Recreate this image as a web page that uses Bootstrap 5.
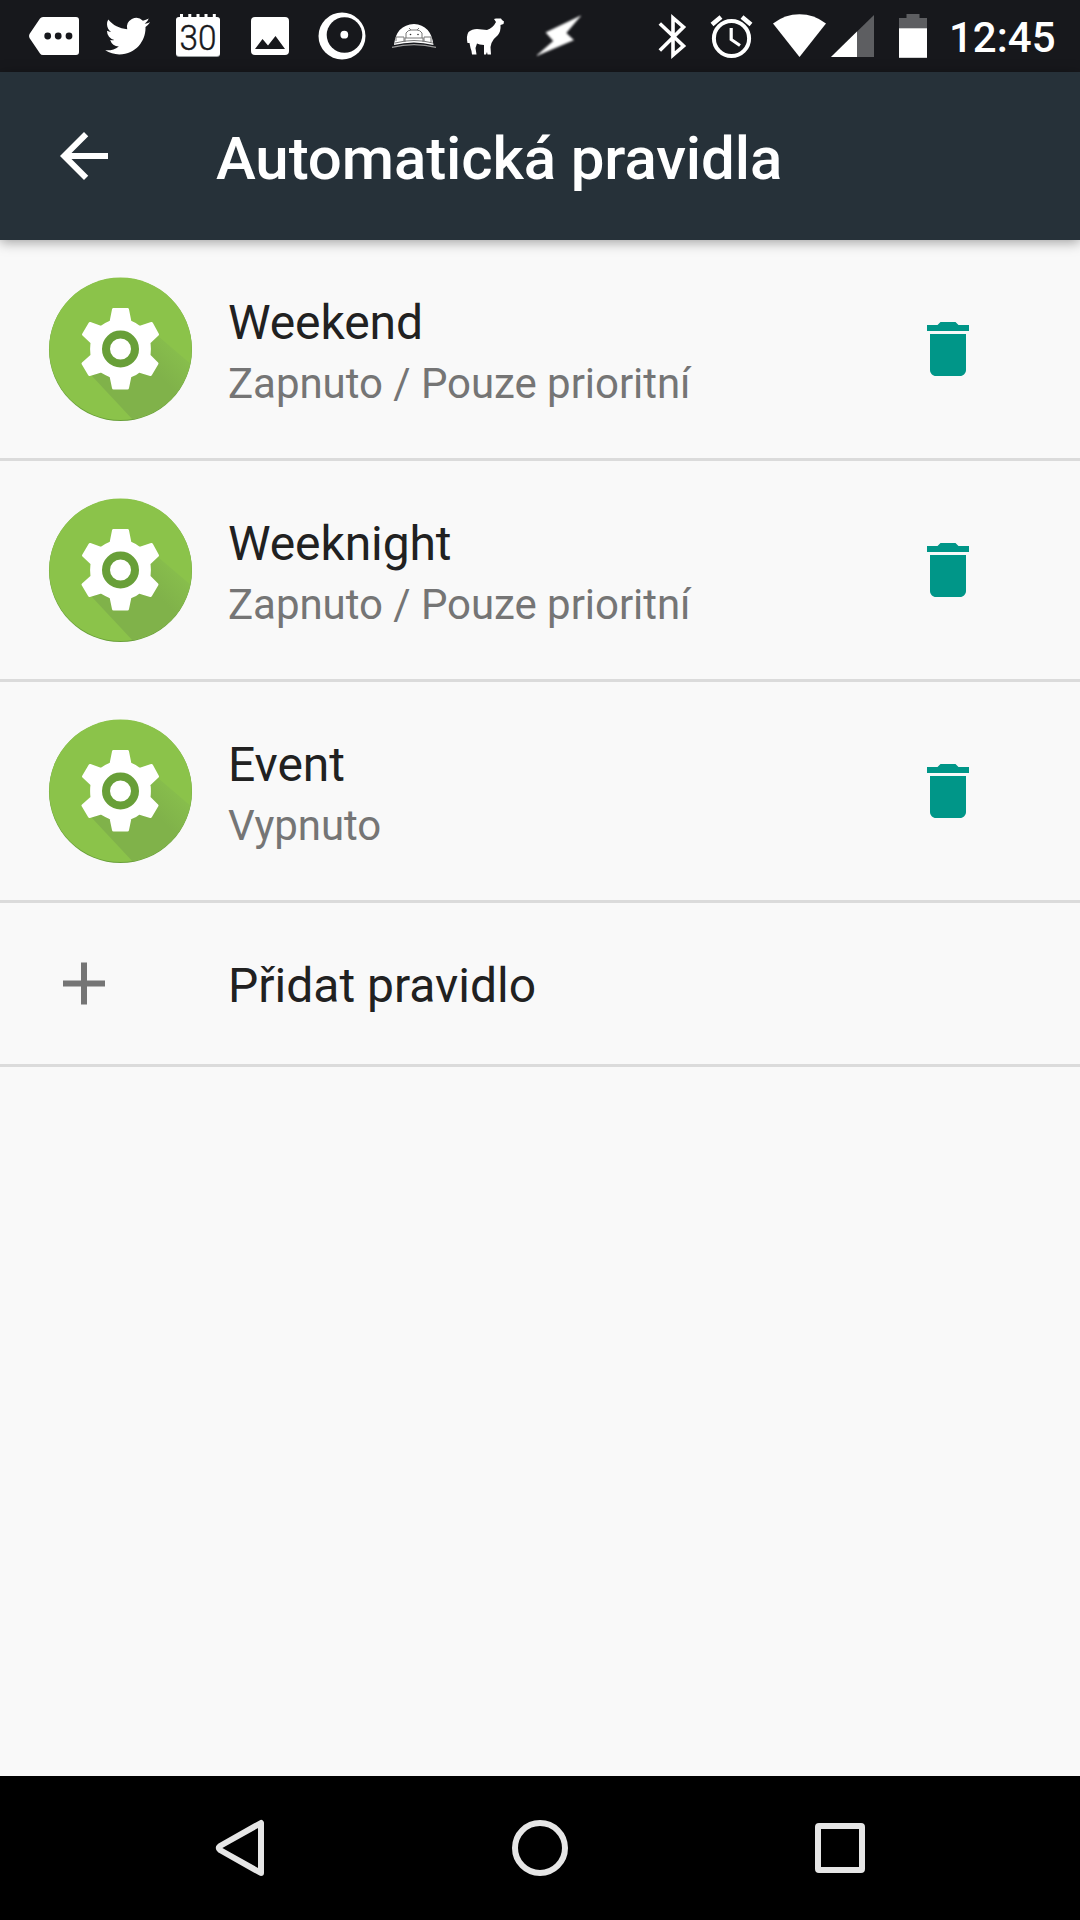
<!DOCTYPE html>
<html lang="cs">
<head>
<meta charset="utf-8">
<meta name="viewport" content="width=device-width, initial-scale=1">
<title>Automatická pravidla</title>
<link href="https://cdn.jsdelivr.net/npm/bootstrap@5.3.0/dist/css/bootstrap.min.css" rel="stylesheet">
<style>
body{font-family:Roboto,"Noto Sans",sans-serif;background:#f9f9f9;color:#212121;width:1080px;height:1920px;overflow:hidden}
svg{display:block;flex:none}
.statusbar{height:72px;background:#17181c;color:#fff}
.clock{font-size:42px;font-weight:500;line-height:72px;padding-top:2px;width:131px}
.appbar{height:168px;background:#263139;color:#fff;padding-left:48px;box-shadow:0 2px 12px rgba(0,0,0,.38);z-index:1}
.screen-title{font-size:60px;font-weight:500;line-height:72px;margin:6px 0 0 96px;letter-spacing:-.1px}
.rule{height:221px;border-bottom:3px solid #dbdbdb;padding:0 96px 0 48px}
.rule-text{margin-left:36px}
.rule-name{font-size:48px;line-height:56px;margin-top:6px;letter-spacing:-.1px}
.rule-state{font-size:42px;line-height:50px;color:#757575;margin-top:8px;letter-spacing:-.05px}
.add-rule{height:164px;border-bottom:3px solid #dbdbdb;padding-left:48px}
.add-label{font-size:48px;line-height:56px;margin:4px 0 0 108px}
.navkeys{height:144px;background:#000;padding:0 168px}
</style>
</head>
<body class="d-flex flex-column">
<svg width="0" height="0" class="position-absolute" aria-hidden="true">
<defs>
<clipPath id="disc"><circle cx="72.500" cy="72" r="71.300"/></clipPath>
<linearGradient id="fade" gradientUnits="userSpaceOnUse" x1="127" y1="73" x2="106" y2="94"><stop offset="0" stop-color="#87bd4c"/><stop offset="1" stop-color="#80b24a"/></linearGradient>
<symbol id="gear" viewBox="0 0 144 144">
<circle cx="72.500" cy="72.500" r="71.500" fill="#689f38"/>
<circle cx="72.500" cy="71.800" r="71.300" fill="#8bc34a"/>
<g clip-path="url(#disc)"><path d="M43 98L86 144H144V88L110 59L90 60Z" fill="url(#fade)"/></g>
<path fill="#fff" stroke="#fff" stroke-width="3" stroke-linejoin="round" d="M65.500 32.500H79.500L82 45Q87 47 91.500 50.500L103.500 46.500L109.500 57.500L101 65.500Q101.800 72 101 78.500L109 86.500L102.500 97.500L91 94Q87 97.500 82 99L79.500 111H65.500L63 99Q58 97 53 94L41.500 97.500L35 86.500L44 78.500Q43.200 72 44 65.500L35.500 57.500L42 46.500L53 50.500Q58 47 63 45Z"/>
<circle cx="72.500" cy="72" r="14.500" fill="#fff" stroke="#689f38" stroke-width="8"/>
</symbol>
<symbol id="trash" viewBox="0 0 24 24"><path fill="#009688" d="M6 19c0 1.100.9 2 2 2h8c1.100 0 2-.9 2-2V7H6zM19 4h-3.500l-1-1h-5l-1 1H5v2h14z"/></symbol>
</defs>
</svg>

<header class="statusbar d-flex flex-shrink-0">
<svg width="93" height="72" viewBox="0 0 93 72"><path fill="#fff" d="M43 17H76Q79 17 79 20V52Q79 55 76 55H43Q41 55 40 53.500L29.500 38Q28.500 36 29.500 34L40 18.500Q41 17 43 17Z"/><g fill="#17181c"><circle cx="47.700" cy="36" r="3.400"/><circle cx="58.200" cy="36" r="3.400"/><circle cx="69" cy="36" r="3.400"/></g></svg>
<svg width="70" height="72" viewBox="93 0 70 72"><path fill="#fff" transform="translate(105.200 13.700) scale(1.870)" d="M23.953 4.570a10 10 0 01-2.825.775 4.958 4.958 0 002.163-2.723c-.951.555-2.005.959-3.127 1.184a4.920 4.920 0 00-8.384 4.482C7.690 8.095 4.067 6.130 1.640 3.162a4.822 4.822 0 00-.666 2.475c0 1.710.870 3.213 2.188 4.096a4.904 4.904 0 01-2.228-.616v.060a4.923 4.923 0 003.946 4.827 4.996 4.996 0 01-2.212.085 4.936 4.936 0 004.604 3.417 9.867 9.867 0 01-6.102 2.105c-.390 0-.779-.023-1.170-.067a13.995 13.995 0 007.557 2.209c9.053 0 13.998-7.496 13.998-13.985 0-.210 0-.420-.015-.630A9.935 9.935 0 0024 4.590z"/></svg>
<svg width="72" height="72" viewBox="163 0 72 72"><rect x="176" y="18" width="44" height="39" rx="3" fill="#9ba0a2"/><rect x="176" y="17" width="44" height="39" rx="3" fill="#fff"/><path d="M181.500 14v5M189.800 14v5M198 14v5M206 14v5M214.300 14v5" stroke="#fff" stroke-width="3"/><text x="179.500" y="50" font-size="35" font-weight="300" textLength="37" lengthAdjust="spacingAndGlyphs" fill="#17181c" stroke="#17181c" stroke-width=".4">30</text></svg>
<svg width="70" height="72" viewBox="235 0 70 72"><rect x="251" y="17" width="38" height="38" rx="4" fill="#fff"/><path fill="#17181c" d="M255 49L262.500 39L268 45.500L275.500 36L285 49Z"/></svg>
<svg width="75" height="72" viewBox="305 0 75 72"><circle cx="342" cy="36" r="23.500" fill="#fff"/><circle cx="344.500" cy="35" r="17.800" fill="#17181c"/><circle cx="344.300" cy="34.700" r="3.900" fill="#fff"/></svg>
<svg width="70" height="72" viewBox="380 0 70 72"><path fill="#fff" d="M394 45Q396 25 414 24Q431 25 433.500 45Q414 40 394 45Z"/><path fill="none" stroke="#999" stroke-width="1.300" d="M392 47.300Q414 42 436 47.300"/><g fill="none" stroke="#777" stroke-width="1"><path d="M406 38V33Q408 30 411 30L409 28M422 38V33Q420 30 417 30L419 28M411 30H417M405 38H423V42M405 38V42M396 41V37H404V42M424 42V37H431V42M395 43Q414 38 433 43"/></g><circle cx="410.500" cy="34.500" r=".8" fill="#333"/><circle cx="418" cy="34.500" r=".8" fill="#333"/></svg>
<svg width="70" height="72" viewBox="450 0 70 72"><path fill="#fff" d="M494 19L496 18.500L501 18.500L502 20L504 21.500L503.500 24L500.500 25Q501 31 498 35Q493 39 491.500 43L490.500 47L491 54.500H487.500L487 52L486 54.500H484L484 51V45Q479 44.500 477 43.500L475.500 48L476.500 54.500H472L471.500 51L470.500 48L469.500 43L467.500 43Q466 36 468.500 32Q472 29 477 29L487 30Q493 28 496 22Z"/></svg>
<svg width="70" height="72" viewBox="520 0 70 72"><defs><filter id="glow"><feGaussianBlur stdDeviation="1"/></filter></defs><path filter="url(#glow)" fill="#fff" stroke="#fff" stroke-width=".6" d="M580.500 16L566 33L573.500 40L537 55.500L553.500 41L546 32.500Z"/></svg>
<svg width="300" height="72" viewBox="590 0 300 72" class="ms-auto">
<g fill="none" stroke="#fff" stroke-width="3.600"><path d="M659.800 23.500L683.500 46L673 55V18L683.500 27L659.800 50.500"/></g>
<circle cx="731.500" cy="38.500" r="17.600" fill="none" stroke="#fff" stroke-width="4"/><path d="M731.200 28V39.500L740 45.500" fill="none" stroke="#fff" stroke-width="3.200"/><path d="M712 24.500L721 17M742 17L751 24.500" fill="none" stroke="#fff" stroke-width="4.500"/>
<path fill="#fff" d="M773 23.500Q785 14.300 799.500 14.300T826 23.500L799.500 57Z"/>
<path fill="#5d5e61" d="M874 15V57H831Z"/><path fill="#fff" d="M857 31.500V57H831Z"/>
</svg>
<svg width="59" height="72" viewBox="890 0 59 72"><path fill="#5d5e61" d="M906.500 14H919.500V18H927V29H899V18H906.500Z"/><rect x="899" y="28.300" width="28" height="29.500" fill="#fff"/></svg>
<div class="clock">12:45</div>
</header>

<nav class="appbar d-flex align-items-center flex-shrink-0 position-relative">
<svg width="72" height="72" viewBox="0 0 24 24"><path fill="#fff" d="M20 11H7.830l5.590-5.590L12 4l-8 8 8 8 1.410-1.410L7.830 13H20v-2z"/></svg>
<h1 class="screen-title">Automatická pravidla</h1>
</nav>

<main class="flex-grow-1">
<div class="rule d-flex align-items-center"><svg width="144" height="144"><use href="#gear"/></svg><div class="rule-text flex-grow-1"><div class="rule-name">Weekend</div><div class="rule-state">Zapnuto / Pouze prioritní</div></div><svg width="72" height="72"><use href="#trash"/></svg></div>
<div class="rule d-flex align-items-center"><svg width="144" height="144"><use href="#gear"/></svg><div class="rule-text flex-grow-1"><div class="rule-name">Weeknight</div><div class="rule-state">Zapnuto / Pouze prioritní</div></div><svg width="72" height="72"><use href="#trash"/></svg></div>
<div class="rule d-flex align-items-center"><svg width="144" height="144"><use href="#gear"/></svg><div class="rule-text flex-grow-1"><div class="rule-name">Event</div><div class="rule-state">Vypnuto</div></div><svg width="72" height="72"><use href="#trash"/></svg></div>
<div class="add-rule d-flex align-items-center"><svg width="72" height="72" viewBox="0 0 72 72"><path d="M15 35.500H57M36 14.500V56.500" stroke="#757575" stroke-width="6"/></svg><div class="add-label">Přidat pravidlo</div></div>
</main>

<footer class="navkeys d-flex align-items-center justify-content-between flex-shrink-0">
<svg width="144" height="144" viewBox="0 0 144 144"><path fill="none" stroke="#e6e6e6" stroke-width="6" stroke-linejoin="round" d="M93 47V97L52 74Q49.500 72 52 70Z"/></svg>
<svg width="144" height="144" viewBox="0 0 144 144"><circle cx="72" cy="72" r="25" fill="none" stroke="#e6e6e6" stroke-width="6"/></svg>
<svg width="144" height="144" viewBox="0 0 144 144"><rect x="50" y="50" width="44" height="44" rx="1" fill="none" stroke="#e6e6e6" stroke-width="6"/></svg>
</footer>
<script src="https://cdn.jsdelivr.net/npm/bootstrap@5.3.0/dist/js/bootstrap.bundle.min.js"></script>
</body>
</html>
